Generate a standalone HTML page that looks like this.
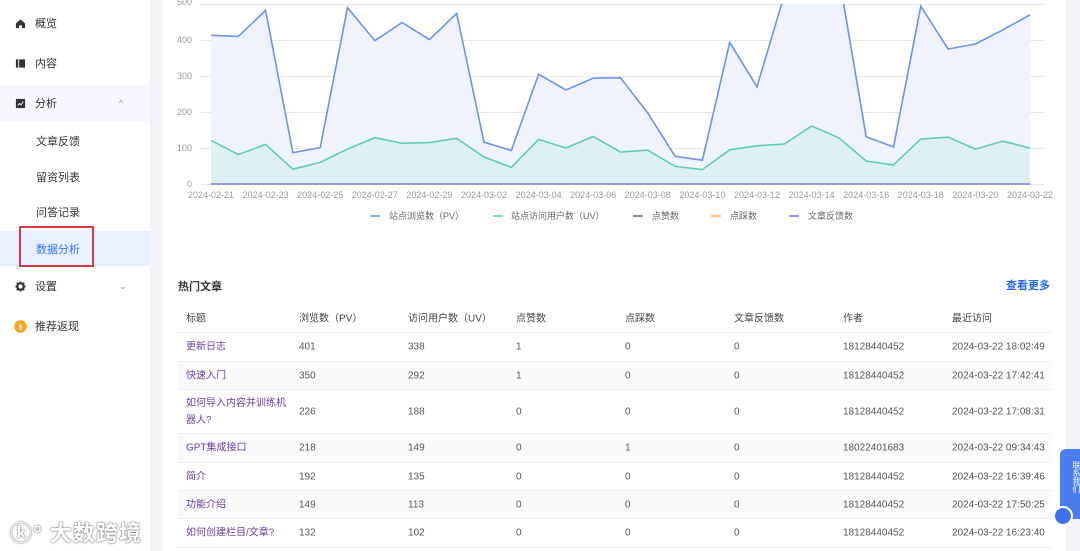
<!DOCTYPE html>
<html><head><meta charset="utf-8"><style>
*{margin:0;padding:0;box-sizing:border-box}
body{width:1080px;height:551px;overflow:hidden;background:#f2f3f7;font-family:"Liberation Sans","Noto Sans CJK SC",sans-serif;position:relative;color:#333}
.side{position:absolute;left:0;top:0;width:150px;height:551px;background:#fff}
.it{position:absolute;left:0;width:150px;height:36px;font-size:11px;color:#333;display:flex;align-items:center}
.it .ic{position:absolute;left:15px;width:11px;height:11px}
.it span.t{position:absolute;left:35px}
.card{position:absolute;left:163px;top:0;width:903px;height:551px;background:#fff}
.tbl{position:absolute;left:178px;top:305px;width:874px;font-size:10px;color:#555}
.row{position:relative;border-bottom:1px solid #eee}
.row span{position:absolute;top:50%;transform:translateY(-50%);line-height:17px}
.row.s{background:#fafafa}
.row .a{color:#6b3fa0}
</style></head><body>
<div class="side">
 <div class="it" style="top:5px"><svg class="ic" viewBox="0 0 12 12"><path d="M1 6L6 1.5 11 6V11H7.5V8H4.5V11H1Z" fill="#333"/></svg><span class="t">概览</span></div>
 <div class="it" style="top:45px"><svg class="ic" viewBox="0 0 12 12"><path d="M1 1.5h2.5v9H1zM4.5 1.5H11v9H4.5z" fill="#333"/></svg><span class="t">内容</span></div>
 <div class="it" style="top:85px;background:#f5f7fb"><svg class="ic" viewBox="0 0 12 12"><rect x="1" y="1" width="10" height="10" fill="#333"/><path d="M3 8l2-2 1.5 1.5L9 4" stroke="#fff" fill="none"/></svg><span class="t">分析</span><span style="position:absolute;left:119px;font-size:9px;color:#888">^</span></div>
 <div class="it" style="top:123px"><span class="t" style="left:36px">文章反馈</span></div>
 <div class="it" style="top:159px"><span class="t" style="left:36px">留资列表</span></div>
 <div class="it" style="top:194px"><span class="t" style="left:36px">问答记录</span></div>
 <div class="it" style="top:231px;height:35px;background:#e8f0fe;color:#3370ff"><span class="t" style="left:36px">数据分析</span></div>
 <div style="position:absolute;left:19px;top:226px;width:75px;height:41px;border:2px solid #d9363e"></div>
 <div class="it" style="top:268px"><svg class="ic" viewBox="0 0 12 12"><circle cx="6" cy="6" r="3.5" fill="none" stroke="#333" stroke-width="2.4"/><path d="M6 0.5v2M6 9.5v2M0.5 6h2M9.5 6h2M2 2l1.5 1.5M8.5 8.5L10 10M2 10l1.5-1.5M8.5 3.5L10 2" stroke="#333" stroke-width="2"/></svg><span class="t">设置</span><span style="position:absolute;left:119px;font-size:9px;color:#888">⌄</span></div>
 <div class="it" style="top:308px"><svg class="ic" style="width:13px;height:13px;left:14px" viewBox="0 0 12 12"><circle cx="6" cy="6" r="5.8" fill="#f5a623"/><text x="6" y="8.6" font-size="7" text-anchor="middle" fill="#fff">$</text></svg><span class="t">推荐返现</span></div>
 <div style="position:absolute;left:10px;top:516px;font-size:22px;color:#fff;font-weight:bold;text-shadow:0 0 2px #777,0 0 1px #555;letter-spacing:1px">ⓚ° 大数跨境</div>
</div>
<div class="card"></div>
<svg style="position:absolute;left:0;top:0" width="1080" height="240">
 <g stroke="#e8e8e8" stroke-width="1">
  <line x1="200" y1="4.5" x2="1044" y2="4.5"/><line x1="200" y1="40.5" x2="1044" y2="40.5"/><line x1="200" y1="76.5" x2="1044" y2="76.5"/><line x1="200" y1="112.5" x2="1044" y2="112.5"/><line x1="200" y1="148.5" x2="1044" y2="148.5"/><line x1="200" y1="184.5" x2="1044" y2="184.5"/>
 </g>
 <g font-size="9" fill="#999" text-anchor="end">
  <text x="192" y="5">500</text><text x="192" y="43">400</text><text x="192" y="79">300</text><text x="192" y="115">200</text><text x="192" y="151">100</text><text x="192" y="187">0</text>
 </g>
 <defs><clipPath id="c"><rect x="200" y="4" width="860" height="190"/></clipPath></defs>
 <g clip-path="url(#c)">
 <path fill="#eef3fd" d="M211,184 L211,35.3 238.3,36.4 265.6,10.5 292.9,152.7 320.2,147.6 347.5,7.6 374.8,40.7 402.1,22.4 429.4,39.6 456.7,13.4 484,142.2 511.3,150.5 538.6,74.2 565.9,90 593.2,78.2 620.5,77.8 647.8,113.1 675.1,156.3 702.4,160.2 729.7,42.5 757,86.8 784.3,-5 811.6,-17.6 838.9,-24.1 866.2,136.8 893.5,146.9 920.8,6.2 948.1,49 975.4,44 1002.7,29.9 1030,14.8 L1030,184Z"/>
 <path fill="#dff0f5" d="M211,184 L211,140.4 238.3,154.5 265.6,144.4 292.9,169.2 320.2,162.4 347.5,149.1 374.8,137.6 402.1,143.3 429.4,142.6 456.7,138.3 484,157 511.3,167.4 538.6,139.4 565.9,148 593.2,136.5 620.5,152 647.8,150.2 675.1,166.4 702.4,169.6 729.7,149.8 757,145.8 784.3,144 811.6,126 838.9,137.9 866.2,161 893.5,164.9 920.8,139 948.1,137.2 975.4,149.1 1002.7,141.2 1030,148 L1030,184Z"/>
 <polyline fill="none" stroke="#6b93e8" stroke-width="1.6" points="211,35.3 238.3,36.4 265.6,10.5 292.9,152.7 320.2,147.6 347.5,7.6 374.8,40.7 402.1,22.4 429.4,39.6 456.7,13.4 484,142.2 511.3,150.5 538.6,74.2 565.9,90 593.2,78.2 620.5,77.8 647.8,113.1 675.1,156.3 702.4,160.2 729.7,42.5 757,86.8 784.3,-5 811.6,-17.6 838.9,-24.1 866.2,136.8 893.5,146.9 920.8,6.2 948.1,49 975.4,44 1002.7,29.9 1030,14.8"/>
 <polyline fill="none" stroke="#5dcfb0" stroke-width="1.6" points="211,140.4 238.3,154.5 265.6,144.4 292.9,169.2 320.2,162.4 347.5,149.1 374.8,137.6 402.1,143.3 429.4,142.6 456.7,138.3 484,157 511.3,167.4 538.6,139.4 565.9,148 593.2,136.5 620.5,152 647.8,150.2 675.1,166.4 702.4,169.6 729.7,149.8 757,145.8 784.3,144 811.6,126 838.9,137.9 866.2,161 893.5,164.9 920.8,139 948.1,137.2 975.4,149.1 1002.7,141.2 1030,148"/>
 <line x1="211" y1="184" x2="1030" y2="184" stroke="#7b7fe0" stroke-width="1.6"/>
 </g>
 <g font-size="9" fill="#999" text-anchor="middle">
  <text x="211" y="198">2024-02-21</text><text x="265.6" y="198">2024-02-23</text><text x="320.2" y="198">2024-02-25</text><text x="374.8" y="198">2024-02-27</text><text x="429.4" y="198">2024-02-29</text><text x="484" y="198">2024-03-02</text><text x="538.6" y="198">2024-03-04</text><text x="593.2" y="198">2024-03-06</text><text x="647.8" y="198">2024-03-08</text><text x="702.4" y="198">2024-03-10</text><text x="757" y="198">2024-03-12</text><text x="811.6" y="198">2024-03-14</text><text x="866.2" y="198">2024-03-16</text><text x="920.8" y="198">2024-03-18</text><text x="975.4" y="198">2024-03-20</text><text x="1030" y="198">2024-03-22</text>
 </g>
 <g font-size="9" fill="#666">
  <line x1="370" y1="216" x2="380" y2="216" stroke="#6b93e8" stroke-width="1.5"/><text x="389" y="219">站点浏览数（PV）</text>
  <line x1="493" y1="216" x2="503" y2="216" stroke="#5dcfb0" stroke-width="1.5"/><text x="511" y="219">站点访问用户数（UV）</text>
  <line x1="633" y1="216" x2="643" y2="216" stroke="#5a6a8a" stroke-width="1.5"/><text x="652" y="219">点赞数</text>
  <line x1="711" y1="216" x2="721" y2="216" stroke="#f5c036" stroke-width="1.5"/><text x="730" y="219">点踩数</text>
  <line x1="789" y1="216" x2="799" y2="216" stroke="#7b6ee0" stroke-width="1.5"/><text x="808" y="219">文章反馈数</text>
 </g>
 <line x1="178" y1="256.5" x2="1052" y2="256.5" stroke="#eee"/>
</svg>
<div style="position:absolute;left:178px;top:278px;font-size:11px;font-weight:bold;color:#333">热门文章</div>
<div style="position:absolute;left:1006px;top:277px;font-size:11px;font-weight:bold;color:#2468f2">查看更多</div>
<div class="tbl">
 <div class="row" style="height:28px;color:#444"><span style="left:8px">标题</span><span style="left:121px">浏览数（PV）</span><span style="left:230px">访问用户数（UV）</span><span style="left:338px">点赞数</span><span style="left:447px">点踩数</span><span style="left:556px">文章反馈数</span><span style="left:665px">作者</span><span style="left:774px">最近访问</span></div>
 <div class="row" style="height:29px"><span class="a" style="left:8px">更新日志</span><span style="left:121px">401</span><span style="left:230px">338</span><span style="left:338px">1</span><span style="left:447px">0</span><span style="left:556px">0</span><span style="left:665px">18128440452</span><span style="left:774px">2024-03-22 18:02:49</span></div>
 <div class="row s" style="height:28px"><span class="a" style="left:8px">快速入门</span><span style="left:121px">350</span><span style="left:230px">292</span><span style="left:338px">1</span><span style="left:447px">0</span><span style="left:556px">0</span><span style="left:665px">18128440452</span><span style="left:774px">2024-03-22 17:42:41</span></div>
 <div class="row" style="height:44px"><span class="a" style="left:8px;width:100px">如何导入内容并训练机器人?</span><span style="left:121px">226</span><span style="left:230px">188</span><span style="left:338px">0</span><span style="left:447px">0</span><span style="left:556px">0</span><span style="left:665px">18128440452</span><span style="left:774px">2024-03-22 17:08:31</span></div>
 <div class="row s" style="height:29px"><span class="a" style="left:8px">GPT集成接口</span><span style="left:121px">218</span><span style="left:230px">149</span><span style="left:338px">0</span><span style="left:447px">1</span><span style="left:556px">0</span><span style="left:665px">18022401683</span><span style="left:774px">2024-03-22 09:34:43</span></div>
 <div class="row" style="height:28px"><span class="a" style="left:8px">简介</span><span style="left:121px">192</span><span style="left:230px">135</span><span style="left:338px">0</span><span style="left:447px">0</span><span style="left:556px">0</span><span style="left:665px">18128440452</span><span style="left:774px">2024-03-22 16:39:46</span></div>
 <div class="row s" style="height:28px"><span class="a" style="left:8px">功能介绍</span><span style="left:121px">149</span><span style="left:230px">113</span><span style="left:338px">0</span><span style="left:447px">0</span><span style="left:556px">0</span><span style="left:665px">18128440452</span><span style="left:774px">2024-03-22 17:50:25</span></div>
 <div class="row" style="height:29px"><span class="a" style="left:8px">如何创建栏目/文章?</span><span style="left:121px">132</span><span style="left:230px">102</span><span style="left:338px">0</span><span style="left:447px">0</span><span style="left:556px">0</span><span style="left:665px">18128440452</span><span style="left:774px">2024-03-22 16:23:40</span></div>
</div>
<div style="position:absolute;left:1060px;top:449px;width:22px;height:70px;background:#4a7ef0;border-radius:6px 0 0 6px;color:#fff;font-size:8px;writing-mode:vertical-rl;padding:12px 0 0 5px">联系我们</div>
<div style="position:absolute;left:1053px;top:506px;width:20px;height:20px;border-radius:50%;background:#3d72ec;border:2px solid #fff"></div>
</body></html>
